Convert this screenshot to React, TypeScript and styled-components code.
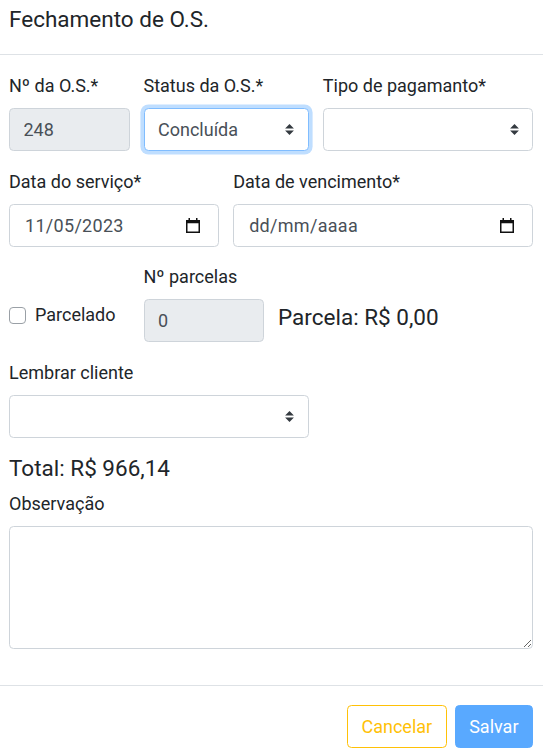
import React, { FC } from "react";
import styled, { createGlobalStyle, css } from "styled-components";

const GlobalStyle = createGlobalStyle`
  * { box-sizing: border-box; }
  body {
    margin: 0;
    background: #fff;
    font-family: Roboto, "Liberation Sans", Arial, sans-serif;
    color: #212529;
    -webkit-font-smoothing: antialiased;
  }
`;

const Modal = styled.div`
  width: 543px;
  background: #fff;
`;

const Header = styled.div`
  padding: 6px 10px 21px 9px;
  border-bottom: 1px solid #dee2e6;
`;

const Title = styled.h5`
  margin: 0;
  font-size: 22.5px;
  font-weight: 400;
  line-height: 27px;
  color: #212529;
`;

const Body = styled.div`
  padding: 18px 10px 18px 9px;
`;

const Row = styled.div<{ $align?: string }>`
  display: grid;
  grid-template-columns: repeat(12, 1fr);
  column-gap: 14px;
  align-items: ${({ $align }) => $align || "start"};
  margin-bottom: 17.5px;
`;

const Col = styled.div<{ $span: number; $mb?: number }>`
  grid-column: span ${({ $span }) => $span};
  min-width: 0;
  margin-bottom: ${({ $mb }) => $mb || 0}px;
`;

const Group = styled.div`
  margin-bottom: 18px;
`;

const Label = styled.label`
  display: block;
  font-size: 18px;
  line-height: 26px;
  margin-bottom: 9px;
  color: #212529;
`;

const control = css`
  display: block;
  width: 100%;
  height: 43px;
  padding: 0 13.5px;
  font-family: Roboto, "Liberation Sans", Arial, sans-serif;
  font-size: 18px;
  color: #495057;
  background: #fff;
  border: 1px solid #ced4da;
  border-radius: 4.5px;
  outline: none;
`;

const Input = styled.input`
  ${control};
  &:read-only {
    background: #e9ecef;
  }
`;

const SelectWrap = styled.div`
  position: relative;
`;

const Select = styled.select<{ $focused?: boolean }>`
  ${control};
  appearance: none;
  padding-right: 36px;
  ${({ $focused }) =>
    $focused &&
    css`
      border-color: #80bdff;
      box-shadow: 0 0 0 3.6px rgba(0, 123, 255, 0.25);
    `}
`;

const Arrow = styled.svg`
  position: absolute;
  right: 14.5px;
  top: 50%;
  margin-top: -5.5px;
  width: 9px;
  height: 11px;
  pointer-events: none;
`;

const DateBox = styled.div`
  ${control};
  display: flex;
  align-items: center;
  justify-content: space-between;
  padding: 0 18px 0 15px;
  letter-spacing: 0.3px;
`;

const CheckLabel = styled.label`
  display: flex;
  align-items: center;
  gap: 9px;
  font-size: 18px;
  line-height: 26px;
  color: #212529;
`;

const Check = styled.input`
  appearance: none;
  margin: 0;
  width: 17px;
  height: 17px;
  border: 1px solid #9aa0a6;
  border-radius: 4px;
  background: #fff;
`;

const Amount = styled.div`
  font-size: 22.5px;
  line-height: 27px;
  color: #212529;
  white-space: nowrap;
`;

const Total = styled(Amount)`
  margin: 1px 0 9px;
`;

const TextArea = styled.textarea`
  ${control};
  height: 123px;
  padding: 6.75px 13.5px;
  resize: vertical;
`;

const Footer = styled.div`
  display: flex;
  justify-content: flex-end;
  gap: 8px;
  padding: 19px 10px 18px 9px;
  border-top: 1px solid #dee2e6;
`;

const Button = styled.button<{ $variant: "warning" | "primary" }>`
  height: 43px;
  padding: 0 13.5px;
  font-family: Roboto, "Liberation Sans", Arial, sans-serif;
  font-size: 18px;
  border-radius: 4.5px;
  cursor: pointer;
  ${({ $variant }) =>
    $variant === "warning"
      ? css`
          color: #ffc107;
          background: #fff;
          border: 1px solid #ffc107;
        `
      : css`
          color: #fff;
          background: #59a9ff;
          border: 1px solid #59a9ff;
        `}
`;

const SelectArrow: FC = () => (
  <Arrow viewBox="0 0 4 5">
    <path d="M2 0L0 2h4zm0 5L0 3h4z" fill="#343a40" />
  </Arrow>
);

const CalendarIcon: FC = () => (
  <svg width="14" height="15" viewBox="0 0 14 15">
    <rect x="2.5" y="0" width="1.5" height="3" fill="#111" />
    <rect x="10" y="0" width="1.5" height="3" fill="#111" />
    <rect x="0.75" y="2.75" width="12.5" height="11.5" fill="none" stroke="#111" strokeWidth="1.5" />
    <rect x="0.75" y="2.75" width="12.5" height="2.5" fill="#111" />
  </svg>
);

interface SelectFieldI {
  label: string;
  value?: string;
  span: number;
  focused?: boolean;
}

const SelectField: FC<SelectFieldI> = ({ label, value, span, focused }) => (
  <Col $span={span}>
    <Label>{label}</Label>
    <SelectWrap>
      <Select $focused={focused} defaultValue={value || ""}>
        <option value={value || ""}>{value || ""}</option>
      </Select>
      <SelectArrow />
    </SelectWrap>
  </Col>
);

const DateField: FC<{ label: string; value: string; span: number }> = ({ label, value, span }) => (
  <Col $span={span}>
    <Label>{label}</Label>
    <DateBox>
      <span>{value}</span>
      <CalendarIcon />
    </DateBox>
  </Col>
);

const App: FC = () => {
  return (
    <Modal>
      <GlobalStyle />
      <Header>
        <Title>Fechamento de O.S.</Title>
      </Header>

      <Body>
        <Row>
          <Col $span={3}>
            <Label>Nº da O.S.*</Label>
            <Input value="248" readOnly />
          </Col>
          <SelectField label="Status da O.S.*" value="Concluída" span={4} focused />
          <SelectField label="Tipo de pagamanto*" span={5} />
        </Row>

        <Row>
          <DateField label="Data do serviço*" value="11/05/2023" span={5} />
          <DateField label="Data de vencimento*" value="dd/mm/aaaa" span={7} />
        </Row>

        <Row $align="end">
          <Col $span={3} $mb={14}>
            <CheckLabel>
              <Check type="checkbox" />
              Parcelado
            </CheckLabel>
          </Col>
          <Col $span={3}>
            <Label>Nº parcelas</Label>
            <Input value="0" readOnly />
          </Col>
          <Col $span={6} $mb={11}>
            <Amount>Parcela: R$ 0,00</Amount>
          </Col>
        </Row>

        <Row>
          <SelectField label="Lembrar cliente" span={7} />
        </Row>

        <Total>Total: R$ 966,14</Total>

        <Group>
          <Label>Observação</Label>
          <TextArea />
        </Group>
      </Body>

      <Footer>
        <Button $variant="warning">Cancelar</Button>
        <Button $variant="primary">Salvar</Button>
      </Footer>
    </Modal>
  );
};

export default App;
